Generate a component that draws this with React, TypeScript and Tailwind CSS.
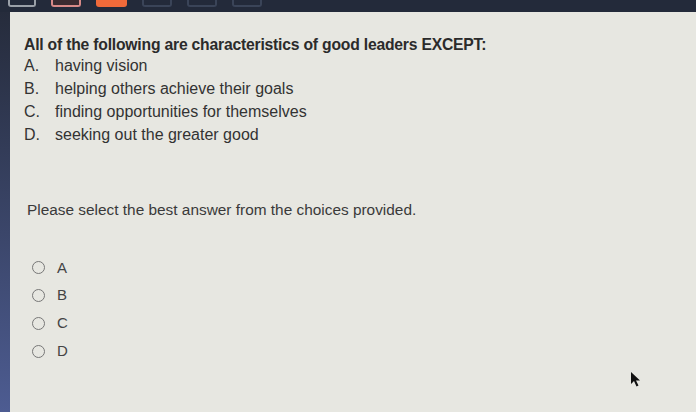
import { useState } from 'react';

const OPTIONS = [
  { k: 'A', text: 'having vision' },
  { k: 'B', text: 'helping others achieve their goals' },
  { k: 'C', text: 'finding opportunities for themselves' },
  { k: 'D', text: 'seeking out the greater good' },
];

export default function App() {
  const [picked, setPicked] = useState<string | null>(null);

  return (
    <div className="w-[696px] h-[412px] overflow-hidden flex flex-col bg-[#262c38] relative" style={{ fontFamily: '"Liberation Sans", Arial, sans-serif' }}>
      {/* top tab strip */}
      <div className="h-[12px] flex-none flex items-start gap-[15px] pl-[8px] bg-[#232a3a]">
        <div className="w-[28px] h-[7px] rounded-b-[3px] border-2 border-t-0 border-[#9aa0a8]" />
        <div className="w-[30px] h-[7px] rounded-b-[3px] border-2 border-t-0 border-[#d88a88] bg-[#3a2a30]" />
        <div className="w-[31px] h-[7px] rounded-b-[3px] bg-[#f06a3a]" />
        <div className="w-[30px] h-[7px] rounded-b-[3px] border-2 border-t-0 border-[#3a4458]" />
        <div className="w-[30px] h-[7px] rounded-b-[3px] border-2 border-t-0 border-[#3a4458]" />
        <div className="w-[30px] h-[7px] rounded-b-[3px] border-2 border-t-0 border-[#3a4458]" />
      </div>

      <div className="flex-1 flex">
        <div className="w-[10px] flex-none bg-gradient-to-b from-[#262c3c] to-[#4d5c92]" />
        <div className="flex-1 bg-[#e7e7e1] pl-[14px] pt-[24px] text-[#2b2b2b]">
          <p className="text-[15.7px] font-bold leading-[18px] tracking-[-0.2px]">All of the following are characteristics of good leaders EXCEPT:</p>
          <div className="flex flex-col">
            {OPTIONS.map(o => (
              <div key={o.k} className="flex h-[23px] items-center text-[16px] text-[#333]">
                <span className="w-[31px]">{o.k}.</span>
                <span>{o.text}</span>
              </div>
            ))}
          </div>

          <p className="mt-[52px] pl-[3px] text-[15.4px] text-[#3a3a3a]">Please select the best answer from the choices provided.</p>

          <div className="mt-[33px] pl-[8px] flex flex-col">
            {OPTIONS.map(o => (
              <label key={o.k} className="flex h-[27.7px] items-center gap-[12px] cursor-pointer text-[15px] text-[#444]" onClick={() => setPicked(o.k)}>
                <span className="w-[13px] h-[13px] rounded-full border-[1.5px] border-[#777] flex items-center justify-center">
                  {picked === o.k && <span className="w-[6px] h-[6px] rounded-full bg-[#555]" />}
                </span>
                <span>{o.k}</span>
              </label>
            ))}
          </div>
        </div>
      </div>

      {/* mouse pointer */}
      <svg className="absolute left-[630px] top-[371px]" width="12" height="17" viewBox="0 0 12 17">
        <path d="M1 1 L1 13 L4 10 L6.5 15.5 L8.5 14.5 L6 9.5 L10 9.5 Z" fill="#111" />
      </svg>
    </div>
  );
}
